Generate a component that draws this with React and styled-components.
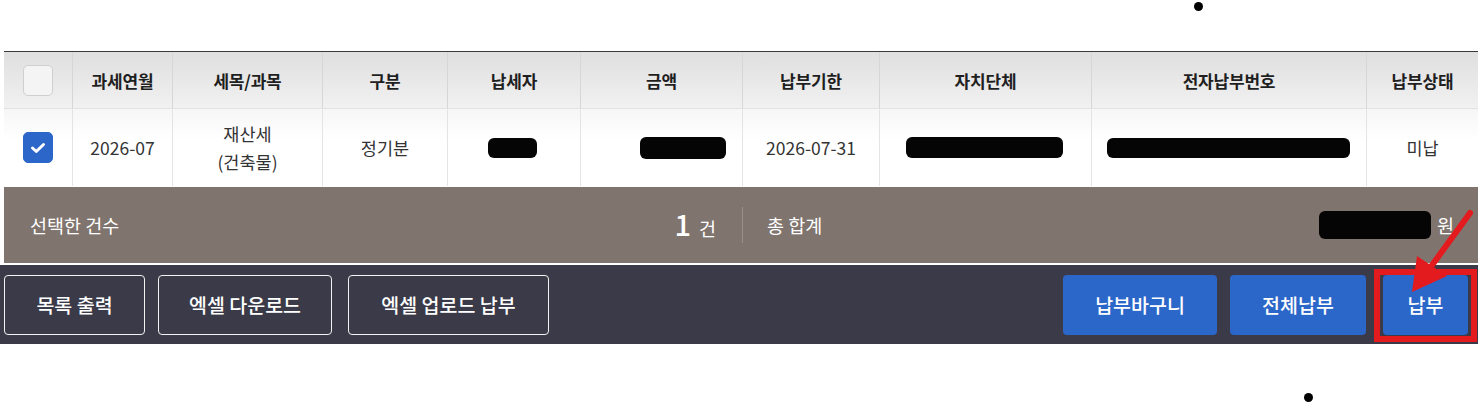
import React from "react";
import styled, { createGlobalStyle } from "styled-components";

const Global = createGlobalStyle`
  html, body { margin: 0; padding: 0; background: #fff; }
  body { font-family: "Noto Sans CJK KR", "Noto Sans", sans-serif; width: 1478px; height: 404px; overflow: hidden; }
  * { box-sizing: border-box; }
`;

const Page = styled.div`
  position: relative;
  width: 1478px;
  height: 404px;
  padding-top: 51px;
  display: flex;
  flex-direction: column;
`;

const Inset = styled.div`
  padding-left: 4px;
`;

const Grid = styled.div`
  display: grid;
  grid-template-columns: 68px 100px 150px 125px 133px 162px 137px 212px 275px 112px;
  border-top: 1px solid #3a3a3a;
`;

const HeadCell = styled.div`
  height: 56px;
  display: flex;
  align-items: center;
  justify-content: center;
  background: linear-gradient(#dfdfdf, #f1f1f1);
  border-left: ${(p) => (p.$first ? "none" : "1px solid #d6d6d6")};
  font-size: 17px;
  font-weight: 700;
  color: #1f1f1f;
  letter-spacing: -0.2px;
`;

const BodyCell = styled.div`
  height: 78px;
  display: flex;
  flex-direction: column;
  align-items: center;
  justify-content: center;
  background: linear-gradient(#f6f6f6, #ffffff 40%);
  border-top: 1px solid #e2e2e2;
  border-left: ${(p) => (p.$first ? "none" : "1px solid #e4e4e4")};
  font-size: 17.5px;
  color: #333;
  line-height: 28px;
`;

const Check = styled.span`
  width: 30px;
  height: 31px;
  border-radius: 5px;
  display: flex;
  align-items: center;
  justify-content: center;
  background: ${(p) => (p.$on ? "#2c66c9" : "#f4f4f4")};
  border: 1px solid ${(p) => (p.$on ? "#2c66c9" : "#cfcfcf")};
`;

const Redact = styled.span`
  display: block;
  width: ${(p) => p.$w}px;
  height: ${(p) => p.$h || 21}px;
  margin-left: ${(p) => p.$dx || 0}px;
  background: #050505;
  border-radius: 6px;
`;

const Summary = styled.div`
  height: 76px;
  margin-top: 1px;
  background: #7f746e;
  display: flex;
  align-items: center;
  color: #fff;
  font-size: 18.5px;
`;

const Left = styled.div`
  width: 738px;
  display: flex;
  align-items: center;
  padding: 0 26px 0 26px;
`;

const SumLabel = styled.span`
  flex: 1;
`;

const Count = styled.span`
  display: flex;
  align-items: baseline;
  gap: 8px;
`;

const Big = styled.span`
  font-size: 29px;
  font-weight: 500;
  line-height: 1;
`;

const Divider = styled.span`
  width: 1px;
  height: 36px;
  background: #9a908a;
`;

const TotalLabel = styled.span`
  padding-left: 24px;
  flex: 1;
`;

const Amount = styled.span`
  display: flex;
  align-items: center;
  gap: 6px;
  padding-right: 24px;
`;

const Bar = styled.div`
  margin-top: 2px;
  height: 79px;
  background: #3a3a48;
  display: flex;
  align-items: center;
  justify-content: space-between;
  padding: 0 10px 6px 4px;
`;

const Group = styled.div`
  display: flex;
  gap: ${(p) => p.$gap}px;
  align-items: center;
`;

const Outline = styled.button`
  height: 60px;
  width: ${(p) => p.$w}px;
  border: 1px solid #f2f2f2;
  border-radius: 4px;
  background: transparent;
  color: #fff;
  font-family: inherit;
  font-size: 19.5px;
  font-weight: 500;
  margin-top: 6px;
  margin-left: ${(p) => p.$ml || 0}px;
`;

const Blue = styled.button`
  height: 60px;
  width: ${(p) => p.$w}px;
  border: none;
  border-radius: 4px;
  background: #2b66c9;
  color: #fff;
  font-family: inherit;
  font-size: 19.5px;
  font-weight: 500;
  margin-top: 6px;
  margin-left: ${(p) => p.$ml || 0}px;
`;

const Dot = styled.span`
  position: absolute;
  left: ${(p) => p.$x}px;
  top: ${(p) => p.$y}px;
  width: 9px;
  height: 9px;
  border-radius: 50%;
  background: #000;
`;

const Overlay = styled.svg`
  position: absolute;
  left: 0;
  top: 0;
  pointer-events: none;
`;

const heads = ["", "과세연월", "세목/과목", "구분", "납세자", "금액", "납부기한", "자치단체", "전자납부번호", "납부상태"];

const CheckMark = () => (
  <svg width="16" height="12" viewBox="0 0 16 12">
    <path d="M2.5 6 L6.3 9.5 L13.5 2.5" fill="none" stroke="#fff" strokeWidth="3" strokeLinecap="round" strokeLinejoin="round" />
  </svg>
);

export default function App() {
  return (
    <>
      <Global />
      <Page>
        <Inset>
          <Grid>
            {heads.map((h, i) => (
              <HeadCell key={i} $first={i === 0}>
                {i === 0 ? <Check /> : h}
              </HeadCell>
            ))}
            <BodyCell $first>
              <Check $on>
                <CheckMark />
              </Check>
            </BodyCell>
            <BodyCell>2026-07</BodyCell>
            <BodyCell>
              <span>재산세</span>
              <span>(건축물)</span>
            </BodyCell>
            <BodyCell>정기분</BodyCell>
            <BodyCell>
              <Redact $w={49} $h={20} $dx={-4} />
            </BodyCell>
            <BodyCell>
              <Redact $w={86} $h={22} $dx={42} />
            </BodyCell>
            <BodyCell>2026-07-31</BodyCell>
            <BodyCell>
              <Redact $w={157} $h={21} $dx={-2} />
            </BodyCell>
            <BodyCell>
              <Redact $w={243} $h={20} $dx={-1} />
            </BodyCell>
            <BodyCell>미납</BodyCell>
          </Grid>
          <Summary>
            <Left>
              <SumLabel>선택한 건수</SumLabel>
              <Count>
                <Big>1</Big>
                <span>건</span>
              </Count>
            </Left>
            <Divider />
            <TotalLabel>총 합계</TotalLabel>
            <Amount>
              <Redact $w={112} $h={28} />
              <span>원</span>
            </Amount>
          </Summary>
        </Inset>
        <Bar>
          <Group $gap={13}>
            <Outline $w={141}>목록 출력</Outline>
            <Outline $w={174}>엑셀 다운로드</Outline>
            <Outline $w={201} $ml={3}>엑셀 업로드 납부</Outline>
          </Group>
          <Group $gap={13}>
            <Blue $w={154}>납부바구니</Blue>
            <Blue $w={136}>전체납부</Blue>
            <Blue $w={85} $ml={4}>납부</Blue>
          </Group>
        </Bar>
        <Dot $x={1194} $y={2} />
        <Dot $x={1304} $y={393} />
        <Overlay width="1478" height="404" viewBox="0 0 1478 404">
          <rect x="1377" y="272" width="97" height="67" fill="none" stroke="#e41b1e" strokeWidth="6" />
          <line x1="1470" y1="213" x2="1430" y2="268" stroke="#e41b1e" strokeWidth="6" strokeLinecap="round" />
          <polygon points="1412,292 1417,256 1447,276" fill="#e41b1e" />
        </Overlay>
      </Page>
    </>
  );
}
